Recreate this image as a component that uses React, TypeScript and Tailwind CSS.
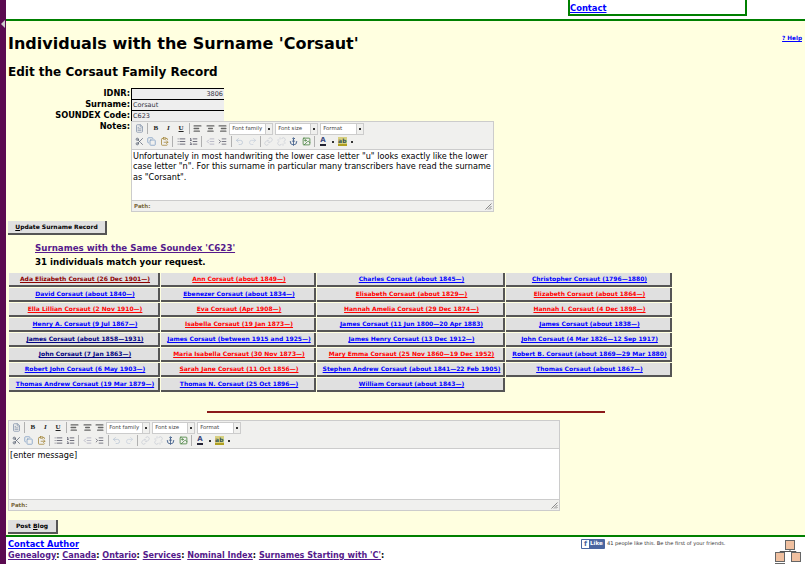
import React from "react";
import { FileText, Scissors, Copy, ClipboardPaste, List, ListOrdered, Outdent, Indent, Undo2, Redo2, Link, Unlink, Anchor, Image, AlignLeft, AlignCenter, AlignRight } from "lucide-react";

type Tone = "r" | "b" | "n" | "m";
const people: [string, Tone][] = [
  ["Ada Elizabeth Corsaut (26 Dec 1901—)", "m"],
  ["Ann Corsaut (about 1849—)", "r"],
  ["Charles Corsaut (about 1845—)", "b"],
  ["Christopher Corsaut (1796—1880)", "b"],
  ["David Corsaut (about 1840—)", "b"],
  ["Ebenezer Corsaut (about 1834—)", "b"],
  ["Elisabeth Corsaut (about 1829—)", "r"],
  ["Elizabeth Corsaut (about 1864—)", "r"],
  ["Ella Lillian Corsaut (2 Nov 1910—)", "r"],
  ["Eva Corsaut (Apr 1908—)", "r"],
  ["Hannah Amelia Corsaut (29 Dec 1874—)", "r"],
  ["Hannah I. Corsaut (4 Dec 1898—)", "r"],
  ["Henry A. Corsaut (9 Jul 1867—)", "b"],
  ["Isabella Corsaut (19 Jan 1873—)", "r"],
  ["James Corsaut (11 Jun 1800—20 Apr 1883)", "b"],
  ["James Corsaut (about 1838—)", "b"],
  ["James Corsaut (about 1858—1931)", "n"],
  ["James Corsaut (between 1915 and 1925—)", "b"],
  ["James Henry Corsaut (13 Dec 1912—)", "b"],
  ["John Corsaut (4 Mar 1826—12 Sep 1917)", "b"],
  ["John Corsaut (7 Jan 1863—)", "n"],
  ["Maria Isabella Corsaut (30 Nov 1873—)", "r"],
  ["Mary Emma Corsaut (25 Nov 1860—19 Dec 1952)", "r"],
  ["Robert B. Corsaut (about 1869—29 Mar 1880)", "b"],
  ["Robert John Corsaut (6 May 1903—)", "b"],
  ["Sarah Jane Corsaut (11 Oct 1856—)", "r"],
  ["Stephen Andrew Corsaut (about 1841—22 Feb 1905)", "b"],
  ["Thomas Corsaut (about 1867—)", "b"],
  ["Thomas Andrew Corsaut (19 Mar 1879—)", "b"],
  ["Thomas N. Corsaut (25 Oct 1896—)", "b"],
  ["William Corsaut (about 1843—)", "b"],
];

const toneClass: Record<Tone, string> = {
  r: "text-[#ff0000]",
  b: "text-[#0000ff]",
  n: "text-[#000080]",
  m: "text-[#8b0000]",
};

const Sep = () => <span className="mx-[1.5px] h-[11px] w-px bg-[#b0b0b0]" />;

function Tool({ children, w = "w-[12.6px]" }: { children: React.ReactNode; w?: string }) {
  return <span className={`flex h-[13px] ${w} shrink-0 items-center justify-center`}>{children}</span>;
}

const ic = "h-[9px] w-[9px]";

function Letter({ c, extra }: { c: string; extra: string }) {
  return <span className={`font-['Liberation_Serif',serif] text-[7px] leading-none font-bold text-[#222] ${extra}`}>{c}</span>;
}

function Select({ label, w }: { label: string; w: string }) {
  return (
    <span className={`mr-[2px] flex h-[12px] ${w} shrink-0 items-stretch border border-[#ccc] bg-white`}>
      <span className="flex-1 truncate pl-[2px] text-[5.4px] leading-[9px] text-[#444]">{label}</span>
      <span className="flex w-[7px] items-center justify-center border-l border-[#ccc] bg-[#f0f0ee]">
        <span className="h-[2px] w-[2px] bg-[#333]" />
      </span>
    </span>
  );
}

function Toolbar() {
  return (
    <div className="flex flex-col border-b border-[#ccc] pl-px pb-px">
      <div className="flex h-[13px] items-center">
        <Tool><FileText className={`${ic} text-[#8090a8]`} /></Tool>
        <Sep />
        <Tool><Letter c="B" extra="" /></Tool>
        <Tool><Letter c="I" extra="italic" /></Tool>
        <Tool><Letter c="U" extra="underline" /></Tool>
        <Sep />
        <Tool><AlignLeft className={`${ic} text-[#666]`} strokeWidth={3.5} /></Tool>
        <Tool><AlignCenter className={`${ic} text-[#666]`} strokeWidth={3.5} /></Tool>
        <Tool><AlignRight className={`${ic} text-[#666]`} strokeWidth={3.5} /></Tool>
        <Select label="Font family" w="w-[44px]" />
        <Select label="Font size" w="w-[43px]" />
        <Select label="Format" w="w-[44px]" />
      </div>
      <div className="flex h-[13px] items-center">
        <Tool><Scissors className={`${ic} text-[#555f70]`} /></Tool>
        <Tool><Copy className={`${ic} text-[#7a9ac0]`} /></Tool>
        <Tool><ClipboardPaste className={`${ic} text-[#a08030]`} /></Tool>
        <Sep />
        <Tool><List className={`${ic} text-[#445]`} /></Tool>
        <Tool><ListOrdered className={`${ic} text-[#445]`} /></Tool>
        <Sep />
        <Tool><Outdent className={`${ic} text-[#aab]`} /></Tool>
        <Tool><Indent className={`${ic} text-[#556]`} /></Tool>
        <Sep />
        <Tool><Undo2 className={`${ic} text-[#b8c4d4]`} /></Tool>
        <Tool><Redo2 className={`${ic} text-[#c8d0dc]`} /></Tool>
        <Sep />
        <Tool><Link className={`${ic} text-[#c8ccd4]`} /></Tool>
        <Tool><Unlink className={`${ic} text-[#c8ccd4]`} /></Tool>
        <Tool><Anchor className={`${ic} text-[#305080]`} /></Tool>
        <Tool><Image className={`${ic} text-[#3a7a30]`} /></Tool>
        <Sep />
        <Tool>
          <span className="border-b-2 border-[#223] text-[7px] leading-[7px] font-bold text-[#3a4a80]">A</span>
        </Tool>
        <Tool w="w-[7px]"><span className="h-[2px] w-[2px] bg-[#333]" /></Tool>
        <Tool>
          <span className="h-[9px] w-[9px] border-b-2 border-[#b0a020] bg-[#d8d080] text-[6px] leading-[7px] font-bold text-[#355]">ab</span>
        </Tool>
        <Tool w="w-[7px]"><span className="h-[2px] w-[2px] bg-[#333]" /></Tool>
      </div>
    </div>
  );
}

function Grip() {
  return (
    <svg width="7" height="7" viewBox="0 0 7 7" className="absolute right-[1px] bottom-[1px]">
      <path d="M6.5 0.5 L0.5 6.5 M6.5 3 L3 6.5 M6.5 5 L5 6.5" stroke="#888" strokeWidth="1" />
    </svg>
  );
}

function Editor({ width, children }: { width: string; children: React.ReactNode }) {
  return (
    <div className={`${width} border border-[#ccc] bg-[#f0f0ee]`}>
      <Toolbar />
      <div className="h-[50px] bg-white px-px pt-px text-[8.15px] leading-[10.3px] text-black">{children}</div>
      <div className="relative flex h-[11px] items-center border-t border-[#ccc] pl-[2px] text-[5.5px] font-bold text-[#7a6a40]">
        Path:
        <Grip />
      </div>
    </div>
  );
}

function Field({ label, value, right }: { label: string; value: string; right?: boolean }) {
  return (
    <div className="flex h-[11px] items-center">
      <span className="w-[122px] text-right text-[8.25px] leading-[11px] font-bold text-black">{label}</span>
      <span className={`ml-px h-[11px] w-[93px] border-t border-l border-black bg-[#eeeeee] px-px text-[6.5px] leading-[10px] text-[#333344] ${right ? "text-right" : ""}`}>
        {value}
      </span>
    </div>
  );
}

function Btn({ children, w }: { children: React.ReactNode; w: string }) {
  return (
    <div className={`flex h-[14px] ${w} items-center justify-center border-r-2 border-b-2 border-[#555] bg-[#e0e0e0] text-[6px] leading-none font-bold whitespace-nowrap text-black`}>
      {children}
    </div>
  );
}

export default function App() {
  return (
    <div className="flex h-[564px] w-[805px] overflow-hidden bg-white font-['DejaVu_Sans',sans-serif]">
      <aside className="relative h-full w-[6px] shrink-0 bg-[#5a0a50]">
        <span className="absolute top-[20px] left-[1px] h-0 w-0 border-y-[4px] border-r-[4px] border-y-transparent border-r-[#cccccc]" />
      </aside>
      <div className="flex min-w-0 flex-1 flex-col">
        <header className="h-[19px] shrink-0 bg-white">
          <div className="ml-[562px] h-[16px] w-[179px] border-x-2 border-b-2 border-[#008000] pt-[2px] text-[8.4px] leading-[12px] font-bold">
            <a className="text-[#0000ff] underline">Contact</a>
          </div>
        </header>
        <main className="h-[518px] shrink-0 border-y-2 border-[#008000] bg-[#ffffe0] pl-[2px]">
          <div className="flex items-start justify-between">
            <h1 className="mt-[12px] text-[16px] leading-[22px] font-bold text-black">Individuals with the Surname 'Corsaut'</h1>
            <a className="mt-[13px] mr-[3px] text-[5.7px] leading-[8px] font-bold text-[#0000ff] underline">? Help</a>
          </div>
          <h2 className="mt-[9px] text-[12px] leading-[16px] font-bold text-black">Edit the Corsaut Family Record</h2>
          <div className="mt-[8px]">
            <Field label="IDNR:" value="3806" right />
            <Field label="Surname:" value="Corsaut" />
            <Field label="SOUNDEX Code:" value="C623" />
            <div className="flex items-start">
              <span className="w-[122px] text-right text-[8.25px] leading-[11px] font-bold text-black">Notes:</span>
              <div className="ml-px">
                <Editor width="w-[363px]">
                  Unfortunately in most handwriting the lower case letter "u" looks exactly like the lower case letter "n". For this surname in particular many transcribers have read the surname as "Corsant".
                </Editor>
              </div>
            </div>
          </div>
          <div className="mt-[9px]">
            <Btn w="w-[99px]"><span><span className="underline">U</span>pdate Surname Record</span></Btn>
          </div>
          <div className="mt-[6px] pl-[27px] text-[8.67px] leading-[14px] font-bold">
            <a className="block text-[#551a8b] underline">Surnames with the Same Soundex 'C623'</a>
            <p className="text-black">31 individuals match your request.</p>
          </div>
          <div className="mt-[4px] ml-px grid w-[664px] grid-cols-[152px_156px_189px_167px]">
            {people.map(([name, tone]) => (
              <div key={name} className="pr-px pb-px">
                <div className="flex h-[14px] items-center justify-center border-r-2 border-b-2 border-[#555] bg-[#e0e0e0] pl-[3px] text-[6px] leading-none font-bold whitespace-nowrap">
                  <a className={`${toneClass[tone]} underline`}>{name}</a>
                </div>
              </div>
            ))}
          </div>
          <div className="mt-[18px] ml-[199px] h-[2px] w-[398px] bg-[#8b1a1a]" />
          <div className="mt-[7px]">
            <Editor width="w-[552px]">[enter message]</Editor>
          </div>
          <div className="mt-[9px]">
            <Btn w="w-[50px]"><span>Post <span className="underline">B</span>log</span></Btn>
          </div>
        </main>
        <footer className="relative flex-1 bg-white pt-[2px] pl-[2px] text-[8.3px] leading-[10.5px] font-bold">
          <a className="block text-[#0000ff] underline">Contact Author</a>
          <p className="text-[8.1px] text-black">
            <a className="text-[#551a8b] underline">Genealogy</a>: <a className="text-[#551a8b] underline">Canada</a>: <a className="text-[#551a8b] underline">Ontario</a>: <a className="text-[#551a8b] underline">Services</a>: <a className="text-[#551a8b] underline">Nominal Index</a>: <a className="text-[#551a8b] underline">Surnames Starting with 'C'</a>:
          </p>
          <div className="absolute top-[2px] left-[575px] flex items-center gap-[2px] font-normal">
            <span className="flex h-[10px] w-[24px] items-center gap-px rounded-[1px] bg-[#4a66a0] pl-px text-[5.5px] leading-none font-bold text-white">
              <span className="flex h-[8px] w-[7px] items-center justify-center bg-white text-[7px] text-[#4a66a0]">f</span>
              Like
            </span>
            <span className="text-[5.1px] leading-none whitespace-nowrap text-[#333]">41 people like this. Be the first of your friends.</span>
          </div>
          <svg width="32" height="24" viewBox="0 0 32 24" className="absolute top-[3px] right-0">
            <path d="M17 10 V11.5 M7 13 V11.5 H23 V13" stroke="#555" strokeWidth="1" fill="none" />
            <rect x="12.5" y="0.5" width="9" height="9" fill="#f0c0a0" stroke="#666" />
            <rect x="2.5" y="12.5" width="9" height="9" fill="#f0c0a0" stroke="#666" />
            <rect x="18.5" y="12.5" width="9" height="9" fill="#f0c0a0" stroke="#666" />
            <path d="M2 23.5 H12" stroke="#666" strokeWidth="1" />
          </svg>
        </footer>
      </div>
    </div>
  );
}
